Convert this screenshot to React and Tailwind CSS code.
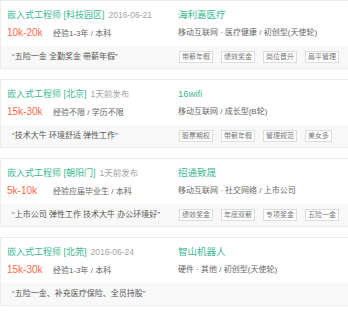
const jobs = [
  {
    title: "嵌入式工程师 [科技园区]",
    time: "2016-06-21",
    salary: "10k-20k",
    req: "经验1-3年 / 本科",
    quote: "“五险一金 全勤奖金 带薪年假”",
    company: "海利嘉医疗",
    industry: "移动互联网 · 医疗健康 / 初创型(天使轮)",
    tags: ["带薪年假", "绩效奖金", "岗位晋升", "扁平管理"],
  },
  {
    title: "嵌入式工程师 [北京]",
    time: "1天前发布",
    salary: "15k-30k",
    req: "经验不限 / 学历不限",
    quote: "“技术大牛 环境舒适 弹性工作”",
    company: "16wifi",
    industry: "移动互联网 / 成长型(B轮)",
    tags: ["股票期权", "带薪年假", "管理规范", "美女多"],
  },
  {
    title: "嵌入式工程师 [朝阳门]",
    time: "1天前发布",
    salary: "5k-10k",
    req: "经验应届毕业生 / 本科",
    quote: "“上市公司 弹性工作 技术大牛 办公环境好”",
    company: "招通致晟",
    industry: "移动互联网 · 社交网络 / 上市公司",
    tags: ["绩效奖金", "年底双薪", "专项奖金", "五险一金"],
  },
  {
    title: "嵌入式工程师 [北苑]",
    time: "2016-06-24",
    salary: "15k-30k",
    req: "经验1-3年 / 本科",
    quote: "“五险一金、补充医疗保险、全员持股”",
    company: "智山机器人",
    industry: "硬件 · 其他 / 初创型(天使轮)",
    tags: [],
  },
];

function JobCard({ job }) {
  return (
    <div className="border border-r-0 border-[#ececec] bg-white">
      <div className="flex h-[45px]">
        <div className="w-[177px] pl-[6px] pt-[7px]">
          <div className="flex items-baseline leading-[14px] whitespace-nowrap">
            <span className="text-[9px] text-[#3cb891]">{job.title}</span>
            <span className="ml-[4px] text-[8.5px] text-[#a3a3a3]">{job.time}</span>
          </div>
          <div className="mt-[4px] flex items-baseline leading-[14px] whitespace-nowrap">
            <span className="w-[46px] text-[10px] text-[#fd6a48]">{job.salary}</span>
            <span className="text-[8px] text-[#666]">{job.req}</span>
          </div>
        </div>
        <div className="flex-1 pt-[7px]">
          <div className="text-[9.5px] leading-[14px] text-[#3cb891]">{job.company}</div>
          <div className="mt-[4px] text-[8px] leading-[14px] text-[#666] whitespace-nowrap">
            {job.industry}
          </div>
        </div>
      </div>
      <div className="flex h-[22px] items-center bg-[#f8f8f8]">
        <div className="w-[177px] pl-[11px] text-[8px] text-[#555] whitespace-nowrap">{job.quote}</div>
        <div className="flex gap-[8px] pl-[1px]">
          {job.tags.map((t) => (
            <span
              key={t}
              className="border border-[#dcdcdc] bg-white px-[2px] text-[7px] leading-[10px] text-[#777] whitespace-nowrap"
            >
              {t}
            </span>
          ))}
        </div>
      </div>
    </div>
  );
}

export default function App() {
  return (
    <div
      className="flex h-[315px] w-[348px] flex-col gap-[10px] overflow-hidden bg-white"
      style={{ fontFamily: '"Liberation Sans", "Noto Sans CJK SC", sans-serif' }}
    >
      {jobs.map((job) => (
        <JobCard key={job.title} job={job} />
      ))}
    </div>
  );
}
